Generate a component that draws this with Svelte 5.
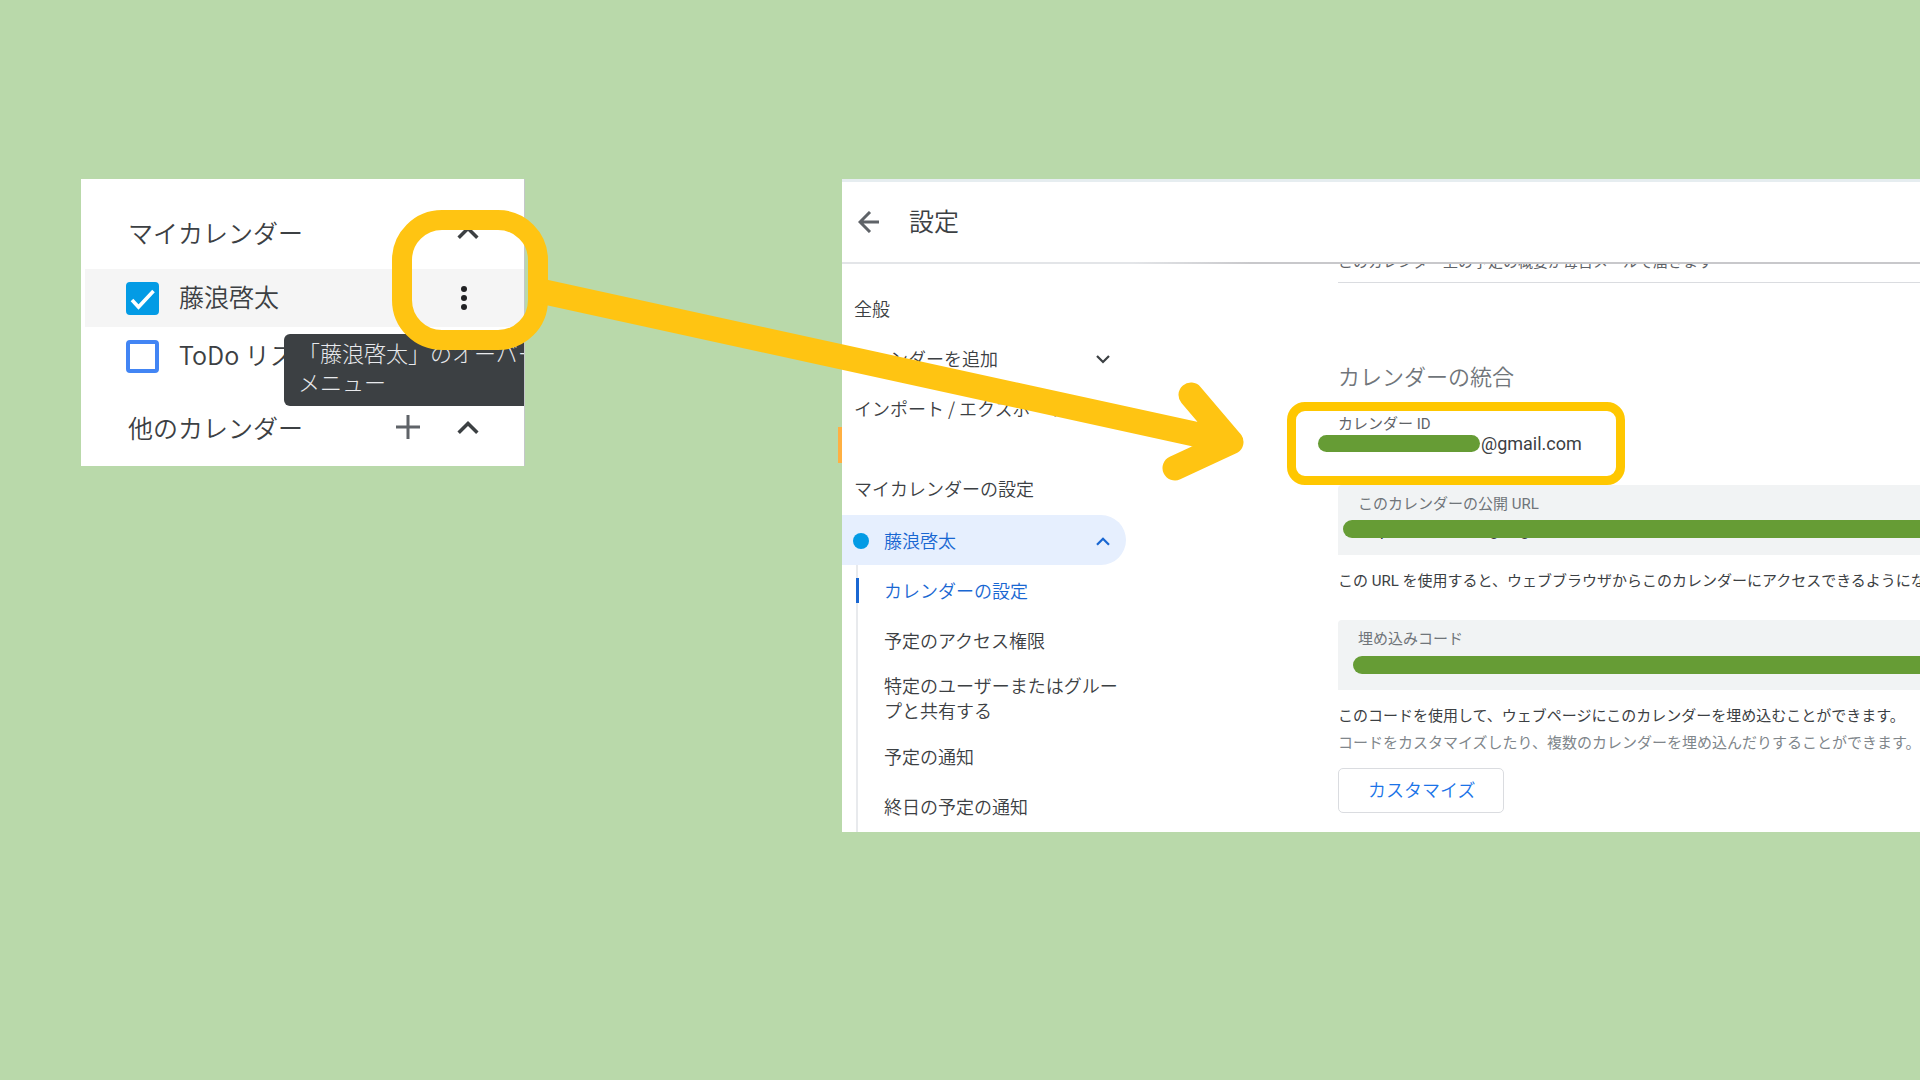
<script>
  const subItems = [
    { text: 'カレンダーの設定', active: true },
    { text: '予定のアクセス権限' },
    { text: '特定のユーザーまたはグループと共有する' },
    { text: '予定の通知' },
    { text: '終日の予定の通知' }
  ];
  let mine = $state(true);
  let todo = $state(false);
</script>

{#snippet chevron(up)}
  <svg class="chevron" viewBox="0 0 24 24" aria-hidden="true">
    <path d={up ? 'M4 17l8-8 8 8' : 'M4 8l8 8 8-8'} />
  </svg>
{/snippet}

<main>
  <section class="list" aria-label="カレンダー一覧">
    <div class="list-head">
      <h2>マイカレンダー</h2>
      <button class="icon" aria-label="マイカレンダーを閉じる">{@render chevron(true)}</button>
    </div>
    <div class="entry hover">
      <label>
        <input type="checkbox" class="blue" bind:checked={mine} />
        <span>藤浪啓太</span>
      </label>
      <button class="icon dots" aria-label="オーバーフロー メニュー">
        <svg viewBox="0 0 24 24" aria-hidden="true"><circle cx="12" cy="3" r="3" /><circle cx="12" cy="12" r="3" /><circle cx="12" cy="21" r="3" /></svg>
      </button>
    </div>
    <div class="entry">
      <label>
        <input type="checkbox" bind:checked={todo} />
        <span>ToDo リスト</span>
      </label>
    </div>
    <div class="list-head other">
      <h2>他のカレンダー</h2>
      <button class="icon plus" aria-label="他のカレンダーを追加">
        <svg viewBox="0 0 24 24" aria-hidden="true"><path d="M12 0v24M0 12h24" /></svg>
      </button>
      <button class="icon" aria-label="他のカレンダーを閉じる">{@render chevron(true)}</button>
    </div>
    <div class="tooltip" role="tooltip">「藤浪啓太」のオーバーフロー<br />メニュー</div>
  </section>

  <section class="settings" aria-label="設定">
    <header>
      <button class="icon back" aria-label="戻る">
        <svg viewBox="0 0 22 22" aria-hidden="true"><path d="M21 11H2M12 1l-10 10 10 10" /></svg>
      </button>
      <h1>設定</h1>
    </header>
    <div class="body">
      <nav>
        <a class="item" href="#general">全般</a>
        <button class="item">カレンダーを追加 {@render chevron(false)}</button>
        <a class="item" href="#import">インポート / エクスポート</a>
        <h3>マイカレンダーの設定</h3>
        <button class="item current"><i></i>藤浪啓太 {@render chevron(true)}</button>
        <ul>
          {#each subItems as item}
            <li><a href="#sub" class:active={item.active}>{item.text}</a></li>
          {/each}
        </ul>
      </nav>
      <div class="content">
        <p class="cut">このカレンダー上の予定の概要が毎日メールで届きます</p>
        <h2>カレンダーの統合</h2>
        <div class="id">
          <span class="caption">カレンダー ID</span>
          <span class="mail">@gmail.com</span>
        </div>
        <div class="field">
          <label for="url">このカレンダーの公開 URL</label>
          <input id="url" readonly value="https://calendar.google.com/calendar" />
          <span class="redact"></span>
        </div>
        <p class="note">この URL を使用すると、ウェブブラウザからこのカレンダーにアクセスできるようになります。</p>
        <div class="field embed">
          <label for="embed">埋め込みコード</label>
          <input id="embed" readonly value={'<iframe src="https://calendar.google.com/calendar'} />
          <span class="redact"></span>
        </div>
        <p class="note code">このコードを使用して、ウェブページにこのカレンダーを埋め込むことができます。</p>
        <p class="note grey">コードをカスタマイズしたり、複数のカレンダーを埋め込んだりすることができます。</p>
        <button class="customize">カスタマイズ</button>
      </div>
    </div>
  </section>

  <span class="sliver"></span>
  <span class="ring menu-ring"></span>
  <span class="ring id-ring"></span>
  <svg class="arrow" viewBox="0 0 720 220" aria-hidden="true">
    <path d="M0 21L691 172M651 125L691 172L635 198" />
  </svg>
</main>

<style>
  :global(body) { margin: 0; background: #b9d9aa; }
  main {
    position: relative;
    box-sizing: border-box;
    min-height: 100vh;
    overflow: hidden;
    display: flex;
    align-items: flex-start;
    gap: 317px;
    padding: 179px 0 100px 81px;
    font-family: Roboto, 'Noto Sans CJK JP', sans-serif;
    font-size: 18px;
    color: #3c4043;
  }
  h1, h2, h3, p, ul { margin: 0; padding: 0; font-weight: inherit; }
  ul { list-style: none; }
  a { color: inherit; text-decoration: none; }
  button { font: inherit; color: inherit; background: none; border: 0; padding: 0; text-align: left; }
  svg { display: block; fill: none; stroke: currentColor; }
  .icon { display: grid; place-items: center; width: 40px; height: 40px; flex: none; }
  .chevron { width: 18px; height: 18px; stroke-width: 3; flex: none; }

  .list {
    position: relative;
    box-sizing: border-box;
    flex: 0 0 444px;
    overflow: hidden;
    background: #fff;
    border-right: 1px solid #c4c7c9;
    padding: 32px 0 18px 4px;
    font-family: 'Noto Sans CJK JP', sans-serif;
    font-size: 25px;
    font-weight: 350;
  }
  .list .chevron { width: 28px; height: 28px; }
  .list-head { display: flex; align-items: center; height: 42px; padding: 0 36px 0 43px; }
  .list-head h2 { flex: 1; font-size: 25px; line-height: 40px; }
  .list-head + .entry { margin-top: 16px; }
  .other { margin-top: 21px; }
  .plus { margin-right: 20px; color: #5f6368; }
  .plus svg { width: 24px; height: 24px; stroke-width: 3; }
  .entry { display: flex; align-items: center; justify-content: space-between; height: 58px; padding: 0 40px 0 41px; }
  .hover { background: #f5f5f5; }
  .entry label { display: flex; align-items: center; gap: 20px; line-height: 36px; }
  .entry span { padding-bottom: 5px; }
  .entry input {
    appearance: none;
    box-sizing: border-box;
    width: 33px;
    height: 33px;
    margin: 0;
    border: 4px solid #4285f4;
    border-radius: 4px;
    background: #fff;
  }
  .entry input.blue:checked {
    border-color: #039be5;
    background: #039be5 url("data:image/svg+xml,%3Csvg xmlns='http://www.w3.org/2000/svg' viewBox='0 0 25 25'%3E%3Cpath d='M2 14l6.500 7L23.500 5' fill='none' stroke='white' stroke-width='3.600'/%3E%3C/svg%3E") center / 25px no-repeat;
  }
  .dots svg { width: 24px; height: 24px; fill: #202124; stroke: none; }
  .tooltip {
    position: absolute;
    left: 203px;
    top: 155px;
    width: 320px;
    box-sizing: border-box;
    padding: 4px 14px 10px;
    border-radius: 6px;
    background: #3c4043;
    color: #e8eaed;
    font-size: 22px;
    font-weight: 300;
    line-height: 29px;
    white-space: nowrap;
  }

  .settings {
    flex: 1;
    min-width: 0;
    overflow: hidden;
    background: #fff;
    box-sizing: border-box;
    border-top: 3px solid #e6edf0;
  }
  header {
    position: relative;
    z-index: 1;
    display: flex;
    align-items: center;
    gap: 20px;
    height: 82px;
    box-sizing: border-box;
    padding: 0 0 2px 7px;
    background: linear-gradient(90deg, #e3e5e8 27%, #c8c8cb 38%) bottom / 100% 2px no-repeat #fff;
  }
  h1 { font-size: 25px; line-height: 40px; font-weight: 350; padding-top: 2px; }
  .back { color: #5f6368; }
  .back svg { width: 22px; height: 22px; stroke-width: 3; }
  .body { display: flex; align-items: flex-start; gap: 212px; height: 568px; }
  nav { flex: 0 0 284px; padding-top: 19px; font-family: 'Noto Sans CJK JP', sans-serif; font-weight: 350; }
  .item {
    display: flex;
    align-items: center;
    box-sizing: border-box;
    width: 100%;
    height: 50px;
    padding: 0 14px 1px 12px;
    white-space: nowrap;
  }
  .item .chevron { margin: 2px 0 0 auto; }
  h3 { padding: 29px 12px 1px; font-size: 18px; line-height: 52px; }
  .current { background: #e6effe; color: #1967d2; border-radius: 0 25px 25px 0; }
  .current i { width: 16px; height: 16px; margin: 2px 15px 0 -1px; border-radius: 50%; background: #039be5; }
  nav ul { margin-left: 14px; border-left: 2px solid #e8eaed; padding-bottom: 30px; }
  li { position: relative; display: flex; align-items: center; box-sizing: border-box; min-height: 50px; padding: 8px 0 8px 26px; line-height: 25px; }
  .active { color: #1967d2; }
  .active::before { content: ''; position: absolute; left: -2px; top: 13px; width: 3px; height: 25px; background: #1967d2; }

  .content { flex: 1; min-width: 0; margin-top: -14px; white-space: nowrap; }
  .cut { height: 32px; line-height: 24px; border-bottom: 1px solid #dadce0; font-size: 15px; color: #5f6368; }
  .content h2 { margin-top: 75px; font-size: 22px; line-height: 40px; font-weight: 350; color: #70757a; }
  .id { position: relative; display: flex; flex-direction: column; height: 87px; padding-top: 16px; box-sizing: border-box; }
  .caption { font-size: 15px; line-height: 20px; color: #5f6368; }
  .mail { padding-left: 143px; font-size: 18px; line-height: 20px; }
  .id::after { content: ''; position: absolute; left: -20px; top: 37px; width: 162px; height: 17px; border-radius: 9px; background: #669c35; }
  .field {
    position: relative;
    display: flex;
    flex-direction: column;
    box-sizing: border-box;
    height: 70px;
    padding: 9px 0 0 20px;
    background: #f1f3f4;
    border-radius: 4px 0 0 0;
  }
  .field label { font-size: 15px; line-height: 20px; color: #70757a; }
  .field input { border: 0; padding: 0; margin: 4px 0 0; background: none; font: inherit; line-height: 22px; height: 22px; color: #3c4043; }
  .redact { position: absolute; left: 5px; right: 0; top: 35px; height: 18px; border-radius: 9px 0 0 9px; background: #669c35; }
  .embed .redact { left: 15px; top: 36px; }
  .note { margin: 14px 0 27px; font-size: 15px; line-height: 24px; }
  .code { margin-bottom: 0; }
  .grey { margin: 3px 0 13px; color: #80868b; }
  .customize { padding: 0 28px 0 29px; border: 1px solid #dadce0; border-radius: 5px; color: #1a73e8; line-height: 43px; font-weight: 350; }

  .sliver { position: absolute; left: 838px; top: 427px; width: 4px; height: 36px; background: #ffb042; }
  .ring { position: absolute; box-sizing: border-box; }
  .menu-ring { left: 392px; top: 210px; width: 156px; height: 140px; border: 20px solid #ffc412; border-radius: 50px; }
  .id-ring { left: 1287px; top: 402px; width: 338px; height: 83px; border: 9px solid #ffc700; border-radius: 18px; }
  .arrow {
    position: absolute;
    left: 540px;
    top: 270px;
    width: 720px;
    height: 220px;
    stroke: #ffc412;
    stroke-width: 25;
    stroke-linecap: round;
    stroke-linejoin: round;
  }
</style>
